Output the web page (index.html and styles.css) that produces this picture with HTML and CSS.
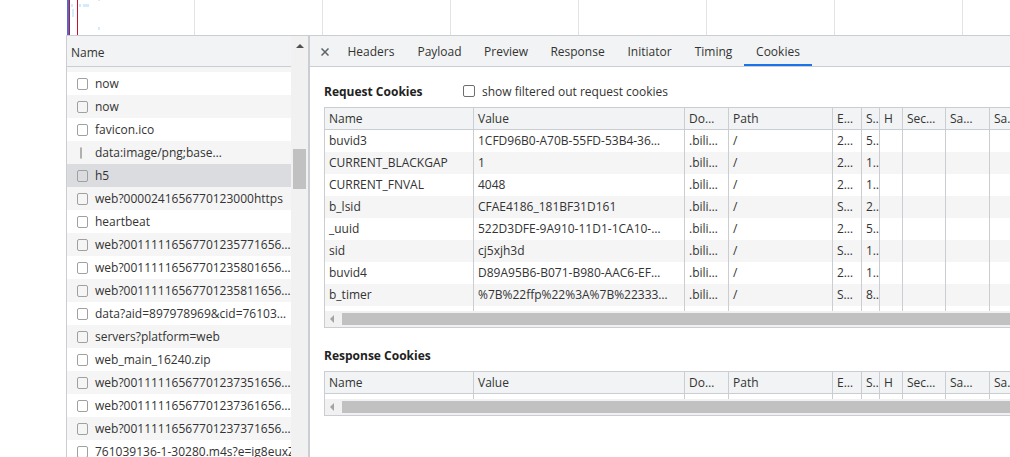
FILE: index.html
```html
<!DOCTYPE html>
<html>
<head>
<meta charset="utf-8">
<link rel="stylesheet" href="styles.css">
</head>
<body>
<div class="overview">
  <svg width="1010" height="35" viewBox="0 0 1010 35">
    <g stroke="#e2e2e2" stroke-width="1">
      <line x1="194.5" y1="0" x2="194.5" y2="35"/>
      <line x1="322.5" y1="0" x2="322.5" y2="35"/>
      <line x1="450.5" y1="0" x2="450.5" y2="35"/>
      <line x1="578.5" y1="0" x2="578.5" y2="35"/>
      <line x1="706.5" y1="0" x2="706.5" y2="35"/>
      <line x1="834.5" y1="0" x2="834.5" y2="35"/>
      <line x1="962.5" y1="0" x2="962.5" y2="35"/>
    </g>
    <g fill="#d4ebfb">
      <rect x="71" y="4" width="2" height="3"/>
      <rect x="79" y="4" width="2" height="3"/>
      <rect x="83" y="4" width="6" height="3"/>
      <rect x="72" y="9" width="2" height="8"/>
      <rect x="98" y="0" width="2" height="1"/>
      <rect x="98" y="27" width="2" height="3"/>
    </g>
    <rect x="67" y="0" width="2" height="35" fill="#5467d9"/>
    <rect x="69" y="0" width="1" height="35" fill="#a3243a"/>
    <rect x="77" y="0" width="1" height="35" fill="#c8102e"/>
  </svg>
</div>
<div class="main">
  <div class="netlist">
    <div class="grid">
      <div class="grid-head">Name</div>
      <div class="row alt partial"></div>
      <div class="row"><span class="ic"></span>now</div>
      <div class="row alt"><span class="ic"></span>now</div>
      <div class="row"><span class="ic"></span>favicon.ico</div>
      <div class="row alt"><span class="ic img"></span>data:image/png;base…</div>
      <div class="row sel"><span class="ic"></span>h5</div>
      <div class="row alt"><span class="ic"></span>web?0000241656770123000https</div>
      <div class="row"><span class="ic"></span>heartbeat</div>
      <div class="row alt"><span class="ic"></span>web?00111116567701235771656…</div>
      <div class="row"><span class="ic"></span>web?00111116567701235801656…</div>
      <div class="row alt"><span class="ic"></span>web?00111116567701235811656…</div>
      <div class="row"><span class="ic"></span>data?aid=897978969&amp;cid=76103…</div>
      <div class="row alt"><span class="ic"></span>servers?platform=web</div>
      <div class="row"><span class="ic"></span>web_main_16240.zip</div>
      <div class="row alt"><span class="ic"></span>web?00111116567701237351656…</div>
      <div class="row"><span class="ic"></span>web?00111116567701237361656…</div>
      <div class="row alt"><span class="ic"></span>web?00111116567701237371656…</div>
      <div class="row"><span class="ic"></span>761039136-1-30280.m4s?e=ig8euxZM</div>
    </div>
    <div class="vscroll">
      <span class="arrow-up"></span>
      <span class="vthumb"></span>
    </div>
  </div>
  <div class="details">
    <div class="tabbar">
      <span class="close">
        <svg width="8" height="8" viewBox="0 0 8 8"><path d="M0.5 0.5 L7.5 7.5 M7.5 0.5 L0.5 7.5" stroke="#5f6368" stroke-width="1.5" fill="none"/></svg>
      </span>
      <span class="tab t-headers">Headers</span>
      <span class="tab t-payload">Payload</span>
      <span class="tab t-preview">Preview</span>
      <span class="tab t-response">Response</span>
      <span class="tab t-initiator">Initiator</span>
      <span class="tab t-timing">Timing</span>
      <span class="tab t-cookies active">Cookies</span>
    </div>
    <div class="cookies">
      <div class="sec-head first">
        <span class="sec-title">Request Cookies</span>
        <span class="cb"></span>
        <span>show filtered out request cookies</span>
      </div>
      <div class="ctable">
        <div class="tr thead"><span>Name</span><span>Value</span><span>Do…</span><span>Path</span><span>E…</span><span>S…</span><span>H</span><span>Sec…</span><span>Sa…</span><span>Sa…</span></div>
        <div class="tr"><span>buvid3</span><span>1CFD96B0-A70B-55FD-53B4-36…</span><span>.bili…</span><span>/</span><span>2…</span><span>5…</span><span></span><span></span><span></span><span></span></div>
        <div class="tr alt"><span>CURRENT_BLACKGAP</span><span>1</span><span>.bili…</span><span>/</span><span>2…</span><span>1…</span><span></span><span></span><span></span><span></span></div>
        <div class="tr"><span>CURRENT_FNVAL</span><span>4048</span><span>.bili…</span><span>/</span><span>2…</span><span>1…</span><span></span><span></span><span></span><span></span></div>
        <div class="tr alt"><span>b_lsid</span><span>CFAE4186_181BF31D161</span><span>.bili…</span><span>/</span><span>S…</span><span>2…</span><span></span><span></span><span></span><span></span></div>
        <div class="tr"><span>_uuid</span><span>522D3DFE-9A910-11D1-1CA10-…</span><span>.bili…</span><span>/</span><span>2…</span><span>5…</span><span></span><span></span><span></span><span></span></div>
        <div class="tr alt"><span>sid</span><span>cj5xjh3d</span><span>.bili…</span><span>/</span><span>S…</span><span>1…</span><span></span><span></span><span></span><span></span></div>
        <div class="tr"><span>buvid4</span><span>D89A95B6-B071-B980-AAC6-EF…</span><span>.bili…</span><span>/</span><span>2…</span><span>1…</span><span></span><span></span><span></span><span></span></div>
        <div class="tr alt"><span>b_timer</span><span>%7B%22ffp%22%3A%7B%22333…</span><span>.bili…</span><span>/</span><span>S…</span><span>8…</span><span></span><span></span><span></span><span></span></div>
        <div class="tr filler"><span></span><span></span><span></span><span></span><span></span><span></span><span></span><span></span><span></span><span></span></div>
        <div class="hscroll"><span class="arrow-left"></span><span class="hthumb"></span></div>
      </div>
      <div class="sec-head second">
        <span class="sec-title">Response Cookies</span>
      </div>
      <div class="ctable">
        <div class="tr thead"><span>Name</span><span>Value</span><span>Do…</span><span>Path</span><span>E…</span><span>S…</span><span>H</span><span>Sec…</span><span>Sa…</span><span>Sa…</span></div>
        <div class="tr filler"><span></span><span></span><span></span><span></span><span></span><span></span><span></span><span></span><span></span><span></span></div>
        <div class="hscroll"><span class="arrow-left"></span><span class="hthumb"></span></div>
      </div>
    </div>
  </div>
</div>
</body>
</html>
```

FILE: styles.css
```css
* { box-sizing: border-box; }
html, body { margin: 0; padding: 0; }
body {
  width: 1010px;
  height: 457px;
  overflow: hidden;
  background: #fff;
  font-family: "Open Sans", "Segoe UI", sans-serif;
  font-size: 12px;
  color: #333;
}
.overview { height: 35px; }
.overview svg { display: block; }

.main {
  display: flex;
  margin-left: 66px;
  height: 422px;
  border-top: 1px solid #cacdd1;
  border-left: 1px solid #cacdd1;
}

/* left network list */
.netlist {
  flex: none;
  width: 243px;
  display: flex;
  border-right: 2px solid #cacdd1;
}
.grid {
  width: 224px;
  display: flex;
  flex-direction: column;
  overflow: hidden;
}
.grid-head {
  flex: none;
  height: 31px;
  background: #f1f3f4;
  border-bottom: 1px solid #cacdd1;
  padding: 2px 0 0 4px;
  display: flex;
  align-items: center;
}
.row {
  flex: none;
  height: 23px;
  display: flex;
  align-items: center;
  padding-left: 10px;
  white-space: nowrap;
  overflow: hidden;
}
.row.partial { height: 5px; }
.row.alt { background: #f5f5f5; }
.row.sel { background: #dadce0; }
.ic {
  flex: none;
  width: 11px;
  height: 12px;
  border: 1px solid #a0a0a0;
  border-radius: 2px;
  margin-right: 7px;
}
.ic.img {
  width: 2px;
  margin-left: 3px;
  margin-right: 13px;
  border-color: #b0b0b0;
  border-radius: 1px;
}
.vscroll {
  flex: none;
  width: 17px;
  background: #f1f1f1;
  display: flex;
  flex-direction: column;
  align-items: center;
}
.arrow-up {
  margin-top: 8px;
  width: 0;
  height: 0;
  border-left: 4px solid transparent;
  border-right: 4px solid transparent;
  border-bottom: 4px solid #505050;
}
.vthumb {
  margin-top: 101px;
  width: 13px;
  height: 40px;
  background: #c1c1c1;
}

/* details */
.details {
  flex: 1;
  min-width: 0;
  overflow: hidden;
  display: flex;
  flex-direction: column;
}
.tabbar {
  flex: none;
  height: 31px;
  background: #f1f3f4;
  border-bottom: 1px solid #cacdd1;
  display: flex;
  align-items: stretch;
}
.close {
  display: flex;
  align-items: center;
  padding: 1px 0 0 11px;
  margin-right: 7px;
}
.close svg { display: block; }
.tab {
  display: flex;
  align-items: center;
  justify-content: center;
  padding-top: 1px;
  color: #333;
  white-space: nowrap;
}
.t-headers { width: 70px; }
.t-payload { width: 67px; }
.t-preview { width: 66px; }
.t-response { width: 77px; }
.t-initiator { width: 67px; }
.t-timing { width: 61px; }
.t-cookies { width: 68px; }
.tab.active { box-shadow: inset 0 -2px 0 #1a73e8; }

.cookies {
  padding-left: 14px;
  overflow: hidden;
}
.sec-head {
  height: 18px;
  display: flex;
  align-items: center;
  white-space: nowrap;
}
.sec-head.first { margin-top: 15px; }
.sec-head.second { margin-top: 18px; }
.sec-title {
  font-weight: 700;
  width: 139px;
  color: #222;
}
.cb {
  width: 12px;
  height: 12px;
  border: 1px solid #6e6e6e;
  border-radius: 2px;
  margin-right: 7px;
}
.ctable {
  margin-top: 7px;
  width: 710px;
  border: 1px solid #cacdd1;
  border-right: none;
}
.tr {
  display: grid;
  grid-template-columns: 149px 211px 44px 104px 29px 18px 23px 43px 44px 44px;
  height: 22px;
}
.tr > span {
  border-right: 1px solid #cacdd1;
  padding-left: 4px;
  overflow: hidden;
  white-space: nowrap;
  line-height: 22px;
}
.tr.thead {
  background: #f1f3f4;
  border-bottom: 1px solid #cacdd1;
}
.tr.thead > span { line-height: 21px; }
.tr.alt { background: #f5f5f5; }
.tr.filler { height: 5px; }
.hscroll {
  height: 16px;
  background: #f1f1f1;
  display: flex;
  align-items: center;
}
.arrow-left {
  margin-left: 5px;
  width: 0;
  height: 0;
  border-top: 4px solid transparent;
  border-bottom: 4px solid transparent;
  border-right: 4px solid #a3a3a3;
}
.hthumb {
  margin-left: 8px;
  flex: 1;
  height: 12px;
  background: #c1c1c1;
}
```
